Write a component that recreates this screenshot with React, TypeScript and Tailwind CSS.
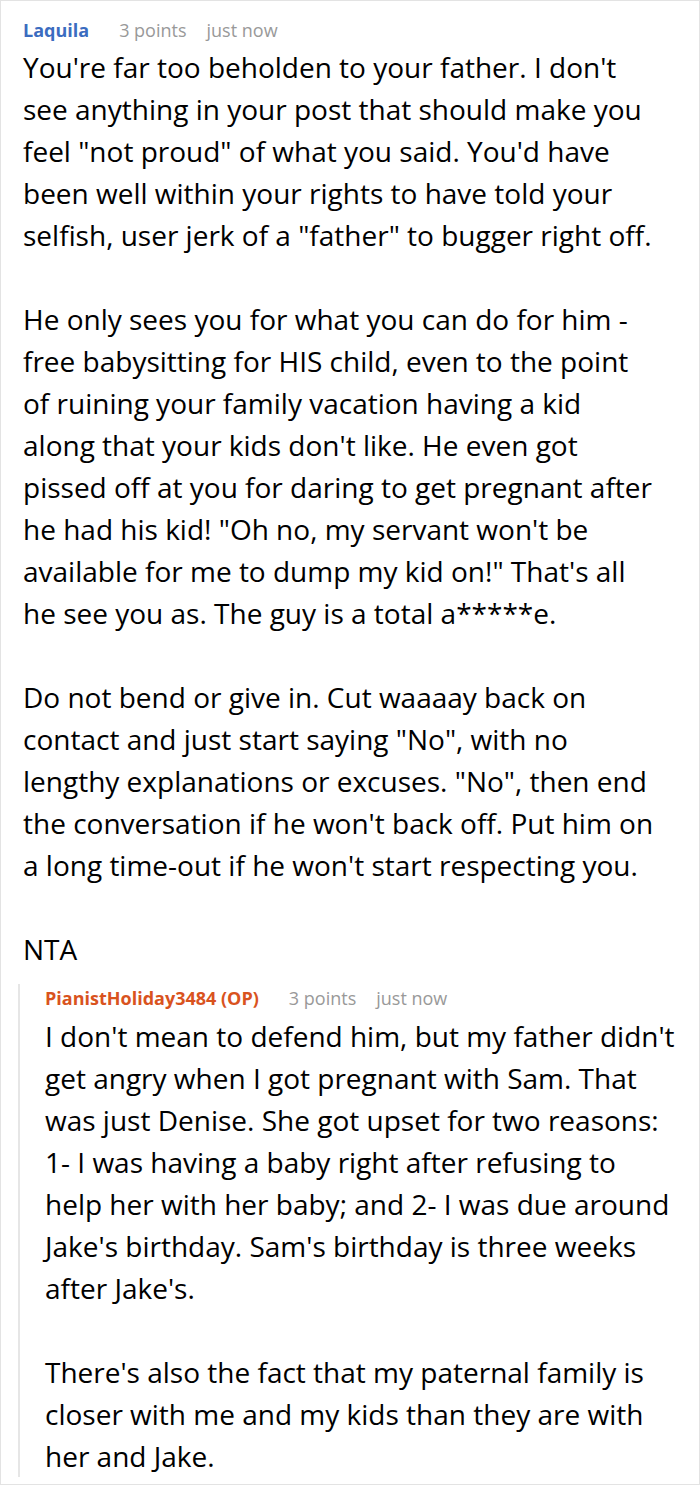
import React from "react";

const font = { fontFamily: '"Open Sans", "Noto Sans", sans-serif' };

function Header({ name, color }: { name: string; color: string }) {
  return (
    <div className="flex items-center h-[28px] text-[18px] leading-[28px]">
      <span className={`font-bold ${color}`}>{name}</span>
      <span className="text-[#999999] ml-[30px]">3 points</span>
      <span className="text-[#999999] ml-[20px]">just now</span>
    </div>
  );
}

function Lines({ lines }: { lines: string[] }) {
  return (
    <p>
      {lines.map((l, i) => (
        <span key={i} className="block whitespace-nowrap">
          {l}
        </span>
      ))}
    </p>
  );
}

export default function App() {
  return (
    <div className="w-[700px] h-[1486px] bg-white overflow-hidden" style={font}>
      <div className="h-[1485px] border border-[#e3e3e3] pl-[22px] pr-[4px] pt-[15px] text-[28px] leading-[42px] text-black">
        <Header name="Laquila" color="text-[#3b6cc0]" />
        <div className="mt-[2px] flex flex-col gap-[42px]">
          <Lines
            lines={[
              "You're far too beholden to your father. I don't",
              "see anything in your post that should make you",
              'feel "not proud" of what you said. You\'d have',
              "been well within your rights to have told your",
              'selfish, user jerk of a "father" to bugger right off.',
            ]}
          />
          <Lines
            lines={[
              "He only sees you for what you can do for him -",
              "free babysitting for HIS child, even to the point",
              "of ruining your family vacation having a kid",
              "along that your kids don't like. He even got",
              "pissed off at you for daring to get pregnant after",
              'he had his kid! "Oh no, my servant won\'t be',
              'available for me to dump my kid on!" That\'s all',
              "he see you as. The guy is a total a*****e.",
            ]}
          />
          <Lines
            lines={[
              "Do not bend or give in. Cut waaaay back on",
              'contact and just start saying "No", with no',
              'lengthy explanations or excuses. "No", then end',
              "the conversation if he won't back off. Put him on",
              "a long time-out if he won't start respecting you.",
            ]}
          />
          <Lines lines={["NTA"]} />
        </div>
        <div className="mt-[14px] -ml-[5px] border-l-2 border-[#e6e6e6] pl-[25px]">
          <Header name="PianistHoliday3484 (OP)" color="text-[#d9531e]" />
          <div className="mt-[3px] flex flex-col gap-[42px]">
            <Lines
              lines={[
                "I don't mean to defend him, but my father didn't",
                "get angry when I got pregnant with Sam. That",
                "was just Denise. She got upset for two reasons:",
                "1- I was having a baby right after refusing to",
                "help her with her baby; and 2- I was due around",
                "Jake's birthday. Sam's birthday is three weeks",
                "after Jake's.",
              ]}
            />
            <Lines
              lines={[
                "There's also the fact that my paternal family is",
                "closer with me and my kids than they are with",
                "her and Jake.",
              ]}
            />
          </div>
        </div>
      </div>
    </div>
  );
}
